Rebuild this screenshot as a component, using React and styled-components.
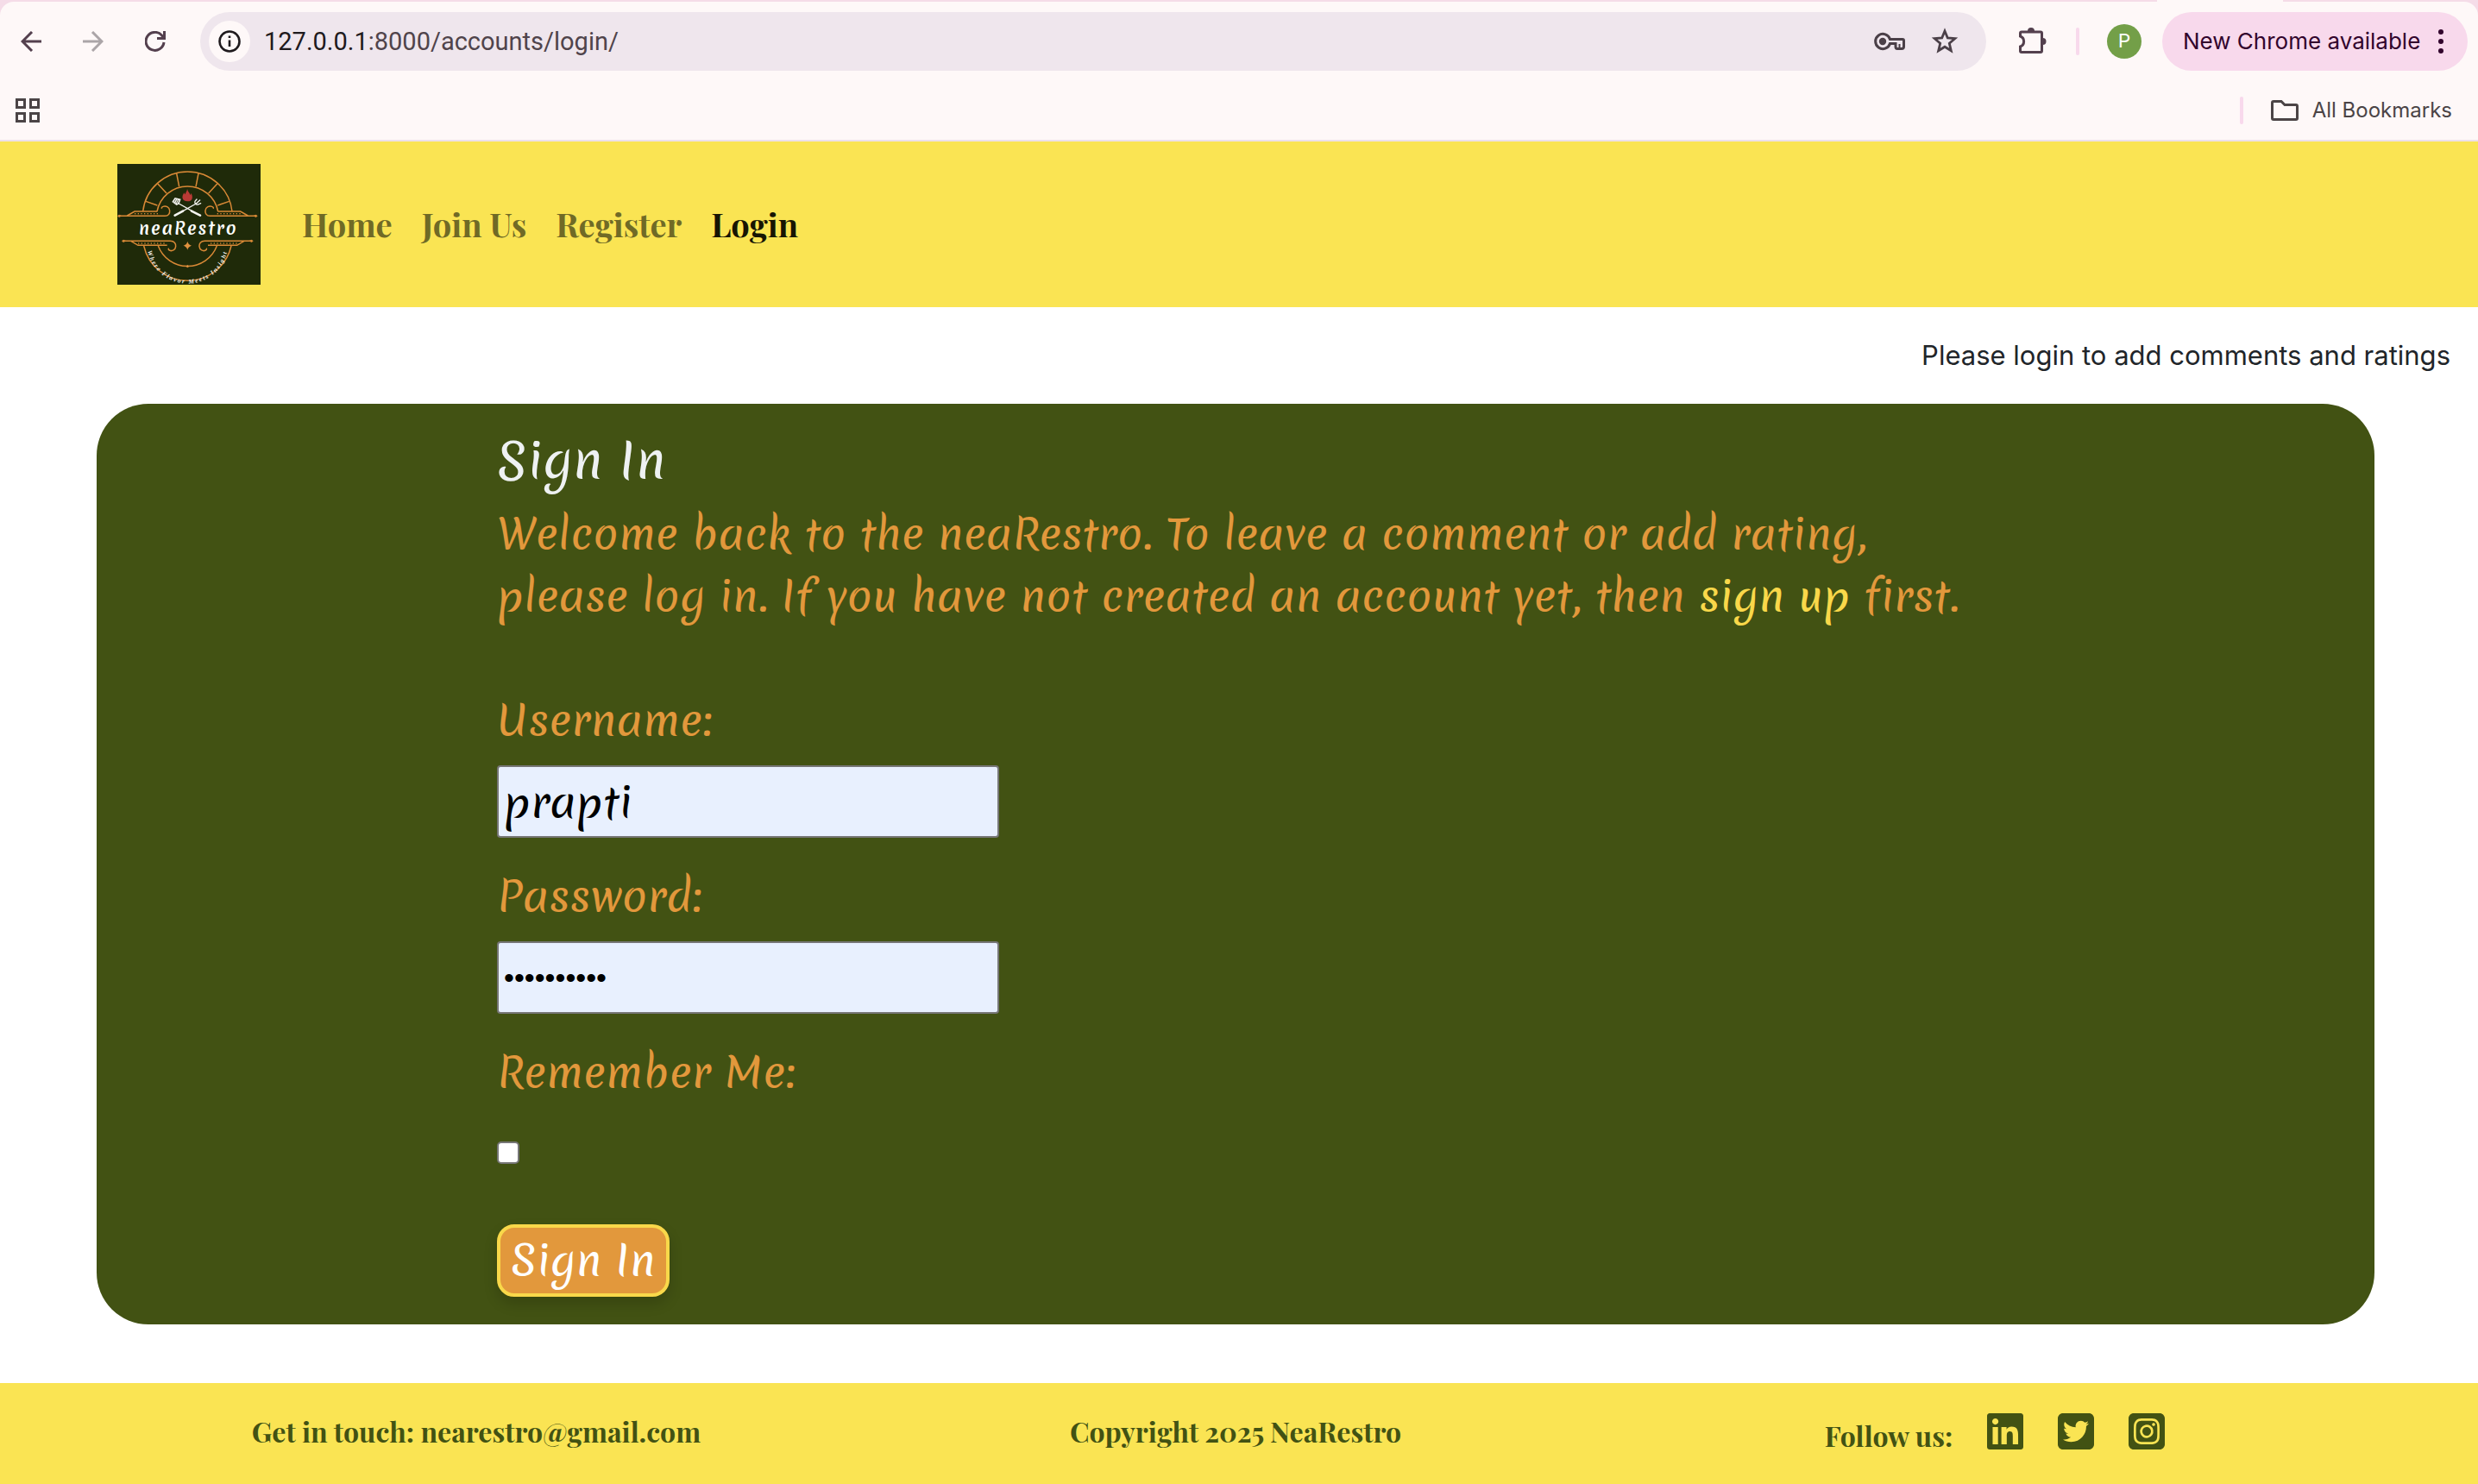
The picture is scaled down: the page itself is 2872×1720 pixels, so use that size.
import React, { useState } from 'react';
import styled, { createGlobalStyle } from 'styled-components';
import { FaLinkedin, FaSquareTwitter, FaSquareInstagram } from 'react-icons/fa6';

const ui = '"Inter", "Liberation Sans", sans-serif';
const serif = '"Playfair Display", "Liberation Serif", serif';
const script = '"Merienda", "Lato", sans-serif';

const green = '#425213';
const orange = '#e2983c';
const yellow = '#fae453';
const gold = '#f9d84a';

const GlobalStyle = createGlobalStyle`
  *, *::before, *::after { box-sizing: border-box; }
  body { margin: 0; background: #fff; font-family: ${ui}; color: #212529; }
  #root { display: flow-root; }
  button { font: inherit; color: inherit; background: none; border: 0; padding: 0; cursor: pointer; }
  a { color: inherit; text-decoration: none; }
  svg { display: block; flex: none; }
`;

const Page = styled.div`
  min-height: 100vh;
  display: flex;
  flex-direction: column;
`;

/* ---------- browser bar ---------- */

const Chrome = styled.div`
  background: #f5dce8;
  border-bottom: 2px solid #ede0e9;
`;

const TabStrip = styled.div`
  display: flex;
  justify-content: flex-end;
  height: 2px;
  padding-right: 226px;
`;

const ActiveTab = styled.div`
  width: 146px;
  background: #fef8f8;
`;

const ChromeBody = styled.div`
  background: #fef8f8;
  border-radius: 16px 16px 0 0;
`;

const Toolbar = styled.div`
  display: flex;
  align-items: center;
  padding: 12px 12px 12px 0;
`;

const ToolButton = styled.button`
  width: ${(p) => p.$width || 72}px;
  height: 56px;
  display: grid;
  place-items: center;
  color: ${(p) => (p.disabled ? '#aba5a8' : '#54404e')};
`;

const AddressBar = styled.div`
  flex: 1;
  display: flex;
  align-items: center;
  height: 68px;
  margin: 0 26px 0 16px;
  padding: 0 32px 0 10px;
  border-radius: 34px;
  background: #efe6ed;
  color: #4b4048;
`;

const SiteInfo = styled.button`
  width: 48px;
  height: 48px;
  border-radius: 50%;
  background: #fef8f8;
  display: grid;
  place-items: center;
  color: #1f1a1d;
`;

const Url = styled.div`
  flex: 1;
  margin-left: 16px;
  font: 400 29px/34px "Roboto", ${ui};
  color: #50444b;
  span { color: #1f1a1d; }
`;

const AddressActions = styled.div`
  display: flex;
  align-items: center;
  gap: 30px;
`;

const Divider = styled.span`
  width: 4px;
  height: 32px;
  border-radius: 2px;
  background: #f8d9ec;
`;

const ToolbarEnd = styled.div`
  display: flex;
  align-items: center;
`;

const Avatar = styled.button`
  width: 40px;
  height: 40px;
  margin: 0 24px 0 32px;
  border-radius: 50%;
  background: #739f48;
  color: #fff;
  font: 400 22px/40px "Roboto", ${ui};
`;

const UpdateChip = styled.button`
  display: flex;
  align-items: center;
  justify-content: space-between;
  width: 354px;
  height: 68px;
  padding: 0 28px 0 24px;
  border-radius: 34px;
  background: #f8d9ec;
  color: #32052d;
  font: 400 26px/32px ${ui};
`;

const Bookmarks = styled.div`
  display: flex;
  align-items: center;
  height: 68px;
  padding: 0 30px 0 18px;
  color: #4b4446;
`;

const AllBookmarks = styled.button`
  display: flex;
  align-items: center;
  gap: 16px;
  margin-left: 32px;
  font: 400 24px/32px ${ui};
`;

const Spacer = styled.div`
  flex: 1;
`;

const DividerGap = styled.span`
  display: flex;
  margin-left: 22px;
`;

/* ---------- site ---------- */

const Header = styled.header`
  display: flex;
  align-items: center;
  gap: 48px;
  height: 192px;
  padding: 0 136px;
  background: ${yellow};
`;

const Nav = styled.nav`
  display: flex;
  gap: 34px;
  font: 700 38px/54px ${serif};
`;

const NavLink = styled.a`
  color: ${(p) => (p.$active ? '#171503' : '#706a26')};
`;

const Notice = styled.p`
  margin: 32px 32px 0;
  text-align: right;
  font: 400 31px/48px ${ui};
`;

const Card = styled.main`
  margin: 32px 120px 68px 112px;
  padding: 32px calc((100% - 232px) / 6 + 24px);
  border-radius: 60px;
  background: ${green};
  color: ${orange};
  font: 400 48px/72px ${script};
`;

const Title = styled.h1`
  margin: 0 0 16px;
  font: 400 56px/67px ${script};
  color: #eef1f2;
`;

const Intro = styled.p`
  margin: 0 0 72px;
`;

const SignUp = styled.a`
  color: ${gold};
`;

const Form = styled.form`
  display: flex;
  flex-direction: column;
  align-items: flex-start;
`;

const Label = styled.label`
  margin-bottom: 16px;
`;

const TextInput = styled.input`
  width: 582px;
  height: 84px;
  margin-bottom: 32px;
  padding: 2px 6px;
  border: 2px solid #767676;
  border-radius: 4px;
  background: #e8f0fe;
  color: #000;
  font: 400 48px/72px ${script};
  &[type='password'] { font: 400 34px/72px "Liberation Sans", sans-serif; }
`;

const CheckInput = styled.input`
  appearance: none;
  width: 26px;
  height: 26px;
  margin: 28px 0 70px;
  border: 2px solid #767676;
  border-radius: 5px;
  background: #fff;
  &:checked { background: #0075ff; }
`;

const SubmitButton = styled.button`
  width: 200px;
  height: 84px;
  border: 4px solid ${gold};
  border-radius: 20px;
  background: ${orange};
  color: #fff;
  font: 400 48px/72px ${script};
  box-shadow: 0 8px 16px rgba(0, 0, 0, 0.16);
`;

const Footer = styled.footer`
  display: grid;
  grid-template-columns: repeat(3, 1fr);
  justify-items: center;
  flex: 1;
  padding: 32px 120px 24px 112px;
  background: ${yellow};
  color: ${green};
  font: 700 32px/48px ${serif};
`;

const Social = styled.div`
  display: flex;
  align-items: flex-start;
  gap: 40px;
  span { line-height: 58px; }
  svg { width: 42px; height: 48px; }
`;

const Icon = ({ w, h, children }) => (
  <svg width={w} height={h || w} viewBox={`0 0 ${w} ${h || w}`} fill="none" stroke="currentColor" strokeWidth="3" aria-hidden="true">
    {children}
  </svg>
);

const dots = (from, to, y) => {
  const out = [];
  for (let x = from; x <= to; x += 11) out.push(<rect key={x} x={x} y={y} width="4" height="4" />);
  return out;
};

const HalfOrnament = () => (
  <g>
    <path d="M8 181H166C178 181 183 172 182 162C181 150 168 144 159 148C154 150 153 153 155 155" />
    <path d="M34 180L60 165H139" />
    <path d="M206 33L215 79M140 68L171 102M99 130L139 144" />
    <path d="M22 268H184C198 268 204 277 203 287C202 299 190 305 181 300C177 298 177 295 179 293" />
    <path d="M47 268L72 283H173" />
    <g fill="#d98936" stroke="none">
      <path d="M0 181l6-5 10 5-10 5zM15 268l6-5 10 5-10 5z" />
      {dots(60, 140, 171)}
      {dots(72, 162, 274)}
    </g>
  </g>
);

const Logo = () => (
  <svg width="166" height="140" viewBox="0 0 498 420" role="img" aria-label="neaRestro">
    <rect width="498" height="420" fill="#1f2a09" />
    <g fill="none" stroke="#d98936" strokeWidth="4.5">
      <path d="M89 165A156 156 0 0 1 399 165" />
      <path d="M138 165A108 108 0 0 1 350 165" />
      <path d="M92 285A156 156 0 0 0 396 285" />
      <path d="M142 285A109 109 0 0 0 346 285" />
      <HalfOrnament />
      <g transform="matrix(-1 0 0 1 488 0)"><HalfOrnament /></g>
    </g>
    <path d="M244 269c3 10 6 12 15 15c-9 3-12 5-15 15c-3-10-6-12-15-15c9-3 12-5 15-15zM238 356l6-5 6 5-6 5z" fill="#e0913f" />
    <path d="M243 86c2 11 9 13 10 22c2-3 3-4 3-7c8 12 7 29-12 29c-20 0-22-18-11-30c0 3 1 5 3 6c1-8 7-11 7-20z" fill="#b93a35" />
    <g fill="none" stroke="#f4f4f0" strokeLinecap="round">
      <path d="M214 138L260 164" strokeWidth="4" />
      <path d="M258 164L288 179" strokeWidth="8" />
      <path d="M274 138L228 164" strokeWidth="4" />
      <path d="M228 164L200 179" strokeWidth="8" />
      <path d="M290 137L280 141C272 143 268 136 270 130L276 123M274 138L287 126" strokeWidth="4" />
    </g>
    <path d="M200 117L221 122L215 139L206 144L190 132z" fill="#f4f4f0" />
    <path d="M203 122l-6 11M209 124l-6 12M214 126l-6 12" stroke="#1f2a09" strokeWidth="2" />
    <text x="247" y="245" textAnchor="middle" fill="#fff" fontFamily="Merienda, Liberation Serif, serif" fontWeight="700" fontSize="58" letterSpacing="6">neaRestro</text>
    <path id="motto" d="M104 292A141 141 0 0 0 384 292" fill="none" />
    <text fill="#f4f4f0" fontFamily="Liberation Serif, serif" fontStyle="italic" fontWeight="700" fontSize="22" letterSpacing="5">
      <textPath href="#motto" startOffset="50%" textAnchor="middle">Where Flavor Meets Insight</textPath>
    </text>
  </svg>
);

const BrowserBar = () => (
  <Chrome>
    <TabStrip><ActiveTab /></TabStrip>
    <ChromeBody>
      <Toolbar>
        <ToolButton aria-label="Back"><Icon w={24}><path d="M24 12H2M13 1L2 12L13 23" /></Icon></ToolButton>
        <ToolButton aria-label="Forward" disabled><Icon w={24}><path d="M0 12H22M11 1L22 12L11 23" /></Icon></ToolButton>
        <ToolButton aria-label="Reload">
          <Icon w={24}><path d="M22 13A10.5 10.5 0 1 1 19.5 5L22 8M22.5 0V8.5H14" /></Icon>
        </ToolButton>
        <AddressBar>
          <SiteInfo aria-label="Site information">
            <Icon w={26}>
              <circle cx="13" cy="13" r="11.5" strokeWidth="2.6" />
              <path d="M13 11.5V19M13 6.5V9" strokeWidth="2.6" />
            </Icon>
          </SiteInfo>
          <Url><span>127.0.0.1</span>:8000/accounts/login/</Url>
          <AddressActions>
            <button aria-label="Saved passwords">
              <Icon w={36} h={32}>
                <path d="M18.5 13.5A8.6 8.6 0 1 0 18.5 18.5H25V22Q25 24.5 27 24.5H32Q34.5 24.5 34.5 22V15Q34.5 13.5 33 13.5Z" />
                <circle cx="10" cy="16" r="4.2" fill="currentColor" stroke="none" />
                <path d="M29.5 19V24" strokeWidth="2" />
              </Icon>
            </button>
            <button aria-label="Bookmark this page">
              <Icon w={32}>
                <path d="M16 4L19.3 12L27.8 12.7L21.3 18.3L23.3 26.7L16 22.2L8.7 26.7L10.7 18.3L4.2 12.7L12.7 12Z" strokeWidth="2.8" />
              </Icon>
            </button>
          </AddressActions>
        </AddressBar>
        <ToolbarEnd>
          <ToolButton $width={56} aria-label="Extensions">
            <Icon w={32} h={36}>
              <path d="M3 7H25Q26.5 7 26.5 8.5V29Q26.5 30.5 25 30.5H3Q1.5 30.5 1.5 29V24C7 22 7 14 1.5 12V8.5Q1.5 7 3 7Z" />
              <path d="M10 6A4 4 0 0 1 18 6zM27.5 14A4 4 0 0 1 27.5 22z" fill="currentColor" stroke="none" />
            </Icon>
          </ToolButton>
          <DividerGap><Divider /></DividerGap>
          <Avatar aria-label="Profile">P</Avatar>
          <UpdateChip>
            New Chrome available
            <Icon w={6} h={28}>
              <g fill="currentColor" stroke="none"><circle cx="3" cy="3" r="3" /><circle cx="3" cy="14" r="3" /><circle cx="3" cy="25" r="3" /></g>
            </Icon>
          </UpdateChip>
        </ToolbarEnd>
      </Toolbar>
      <Bookmarks>
        <button aria-label="Apps">
          <Icon w={28}>
            <path d="M1.5 1.5h9v9h-9zM17.5 1.5h9v9h-9zM1.5 17.5h9v9h-9zM17.5 17.5h9v9h-9z" />
          </Icon>
        </button>
        <Spacer />
        <Divider />
        <AllBookmarks>
          <Icon w={32} h={24}>
            <path d="M3 1.5H12L16 5.5H29Q30.5 5.5 30.5 7V21Q30.5 22.5 29 22.5H3Q1.5 22.5 1.5 21V3Q1.5 1.5 3 1.5Z" />
          </Icon>
          All Bookmarks
        </AllBookmarks>
      </Bookmarks>
    </ChromeBody>
  </Chrome>
);

export default function App() {
  const [name, setName] = useState('prapti');
  const [password, setPassword] = useState('prapti2025');
  return (
    <Page>
      <GlobalStyle />
      <BrowserBar />
      <Header>
        <a href="#home"><Logo /></a>
        <Nav>
          <NavLink href="#home">Home</NavLink>
          <NavLink href="#join">Join Us</NavLink>
          <NavLink href="#register">Register</NavLink>
          <NavLink href="#login" $active>Login</NavLink>
        </Nav>
      </Header>
      <Notice>Please login to add comments and ratings</Notice>
      <Card>
        <Title>Sign In</Title>
        <Intro>
          Welcome back to the neaRestro. To leave a comment or add rating,<br />
          please log in. If you have not created an account yet, then <SignUp href="#signup">sign up</SignUp> first.
        </Intro>
        <Form onSubmit={(e) => e.preventDefault()}>
          <Label htmlFor="username">Username:</Label>
          <TextInput id="username" type="text" value={name} onChange={(e) => setName(e.target.value)} />
          <Label htmlFor="password">Password:</Label>
          <TextInput id="password" type="password" value={password} onChange={(e) => setPassword(e.target.value)} />
          <Label htmlFor="remember">Remember Me:</Label>
          <CheckInput id="remember" type="checkbox" />
          <SubmitButton type="submit">Sign In</SubmitButton>
        </Form>
      </Card>
      <Footer>
        <span>Get in touch: nearestro@gmail.com</span>
        <span>Copyright 2025 NeaRestro</span>
        <Social>
          <span>Follow us:</span>
          <a href="#linkedin" aria-label="LinkedIn"><FaLinkedin /></a>
          <a href="#twitter" aria-label="Twitter"><FaSquareTwitter /></a>
          <a href="#instagram" aria-label="Instagram"><FaSquareInstagram /></a>
        </Social>
      </Footer>
    </Page>
  );
}
